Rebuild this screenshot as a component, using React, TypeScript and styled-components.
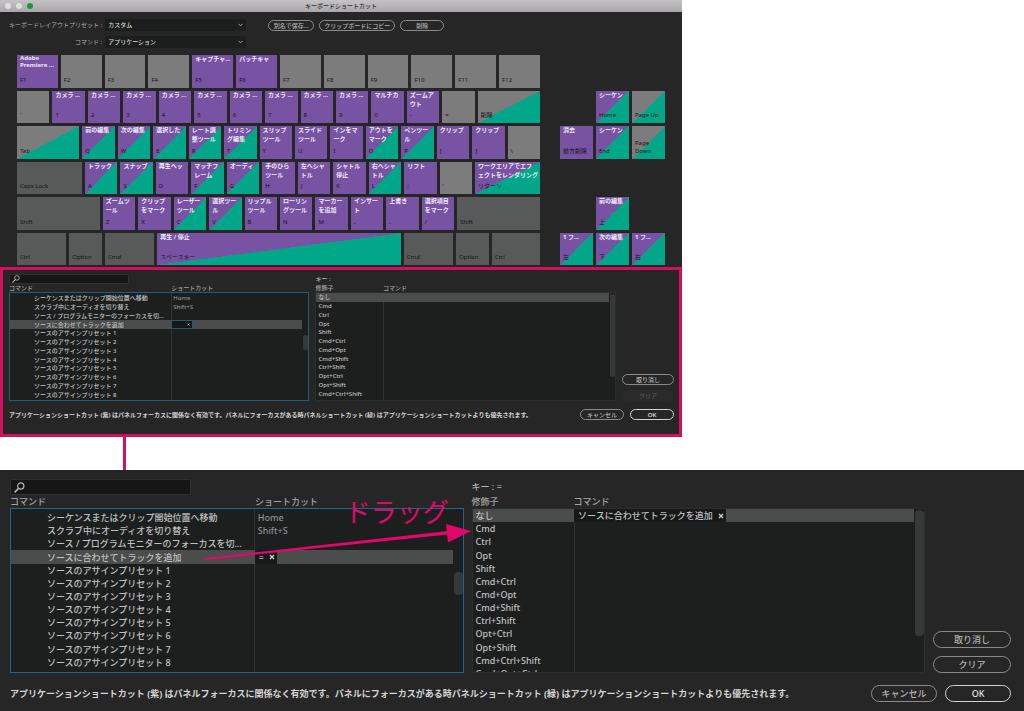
import React from 'react';
import styled, { createGlobalStyle, css, ThemeProvider } from 'styled-components';

interface Metrics {
  font: number;
  searchH: number;
  headH: number;
  boxH: number;
  rowsH: number;
  rowsTop: number;
  indent: number;
  cellPad: number;
  gap: number;
  sideW: number;
  buttonH: number;
  buttonGap: number;
  cancelW: number;
  okW: number;
  footerTop: number;
  padding: string;
  thumbW: number;
  frame: string;
  accent: string;
}

declare module 'styled-components' {
  export interface DefaultTheme extends Metrics {}
}

const compact: Metrics = {
  font: 6,
  searchH: 10,
  headH: 8,
  boxH: 109,
  rowsH: 105,
  rowsTop: 1,
  indent: 24,
  cellPad: 2,
  gap: 6,
  sideW: 52,
  buttonH: 11,
  buttonGap: 5,
  cancelW: 44,
  okW: 44,
  footerTop: 8,
  padding: '4px 5px 14px 6px',
  thumbW: 5,
  frame: '3px solid #d3105f',
  accent: '#1d5f7b',
};

const large: Metrics = {
  font: 9,
  searchH: 16,
  headH: 13,
  boxH: 165,
  rowsH: 158,
  rowsTop: 2,
  indent: 36,
  cellPad: 3,
  gap: 8,
  sideW: 78,
  buttonH: 17,
  buttonGap: 8,
  cancelW: 66,
  okW: 66,
  footerTop: 12,
  padding: '9px 13px 9px 10px',
  thumbW: 9,
  frame: '0 solid transparent',
  accent: '#1a678f',
};

const GlobalStyle = createGlobalStyle`
  *, *::before, *::after { box-sizing: border-box; }
  body {
    margin: 0;
    background: #fff;
    font-family: "Noto Sans", "Noto Sans CJK JP", sans-serif;
    color: #c9c9c9;
  }
  button, input, select { font: inherit; color: inherit; margin: 0; }
`;

const Page = styled.main`
  display: flex;
  flex-direction: column;
`;

const Dialog = styled.section`
  width: 66.6%;
  background: #262626;
`;

const TitleBar = styled.header`
  display: grid;
  grid-template-columns: 1fr auto 1fr;
  align-items: center;
  height: 12px;
  background: linear-gradient(#c4c2c4, #a9a7a9);
  color: #2e2e2e;
`;

const Lights = styled.div`
  display: flex;
  gap: 5px;
  padding-left: 5px;
`;

const Light = styled.span<{ $color: string }>`
  width: 6px;
  height: 6px;
  border-radius: 50%;
  background: ${(p) => p.$color};
`;

const Title = styled.h1`
  margin: 0;
  font-size: 6px;
  line-height: 12px;
  font-weight: 500;
`;

const Toolbar = styled.div`
  display: flex;
  gap: 22px;
  padding: 7px 9px;
  font-size: 6px;
`;

const Fields = styled.div`
  display: grid;
  grid-template-columns: auto 141px;
  gap: 5px 3px;
`;

const FieldLabel = styled.label`
  line-height: 12px;
  text-align: right;
  color: #a9a9a9;
`;

const SelectWrap = styled.div`
  position: relative;
  display: flex;
`;

const Select = styled.select`
  appearance: none;
  width: 100%;
  height: 12px;
  padding: 0 3px;
  border: 0;
  border-radius: 1px;
  background: #1c1d1d;
  line-height: 12px;
  font-weight: 500;
  color: #d6d6d6;
`;

const Chevron = styled.svg`
  position: absolute;
  right: 3px;
  top: 4px;
  pointer-events: none;
`;

const ToolButtons = styled.div`
  display: flex;
  align-items: flex-start;
  gap: 5px;
  padding-top: 1px;
`;

const PillButton = styled.button<{ $w: number; $h: number; $strong?: boolean }>`
  flex: none;
  width: ${(p) => p.$w}px;
  height: ${(p) => p.$h}px;
  padding: 0;
  border: 1px solid ${(p) => (p.$strong ? '#d2d2d2' : '#8b8b8b')};
  border-radius: 9px;
  background: transparent;
  line-height: 1;
  font-weight: 500;
  white-space: nowrap;
  color: ${(p) => (p.$strong ? '#e4e4e4' : '#b4b4b4')};
  &:disabled {
    border-color: #2a2a2a;
    background: #2a2a2a;
    color: #5a5a5a;
  }
`;

const Keyboard = styled.div`
  display: flex;
  gap: 20px;
  height: 210px;
  margin-bottom: 2px;
  padding: 0 17px;
`;

const MainKeys = styled.div`
  flex: 523 1 0;
  display: grid;
  grid-template-rows: repeat(6, 1fr);
  gap: 3px;
  min-width: 0;
`;

const NavKeys = styled.div`
  flex: 105 1 0;
  display: grid;
  grid-template: repeat(6, 1fr) / repeat(3, 1fr);
  gap: 3px;
  min-width: 0;
`;

const KeyRow = styled.div`
  display: flex;
  gap: 3px;
  min-height: 0;
`;

type Tone = 'purple' | 'grey' | 'dark';
const tones: Record<Tone, string> = { purple: '#7852a3', grey: '#7c7c7c', dark: '#585959' };

const KeyCap = styled.div<{ $tone: Tone; $split?: boolean; $weight: number; $row?: number; $col?: number }>`
  display: flex;
  flex-direction: column;
  justify-content: space-between;
  flex: ${(p) => p.$weight} 1 0;
  min-width: 0;
  padding-bottom: 4px;
  overflow: hidden;
  background: ${(p) =>
    p.$split
      ? `linear-gradient(to bottom right, ${tones[p.$tone]} 50%, #02a789 50%)`
      : tones[p.$tone]};
  ${(p) => p.$row && css`grid-area: ${p.$row} / ${p.$col};`}
`;

const KeyAction = styled.span<{ $latin?: boolean }>`
  min-height: 9px;
  padding-left: 3px;
  font-size: 6px;
  line-height: ${(p) => (p.$latin ? 7 : 9)}px;
  font-weight: 700;
  white-space: pre;
  color: #eee9f4;
`;

const KeyName = styled.span`
  padding-left: 3px;
  font-size: 6px;
  line-height: 8px;
  white-space: pre;
  color: #161616;
`;

const Panel = styled.section`
  position: relative;
  padding: ${(p) => p.theme.padding};
  border: ${(p) => p.theme.frame};
  background: #262626;
  font-size: ${(p) => p.theme.font}px;
`;

const PanelBody = styled.div`
  display: flex;
  gap: ${(p) => p.theme.gap}px;
`;

const ListColumn = styled.div`
  flex: 1 1 0;
  min-width: 0;
  position: relative;
`;

const SearchBox = styled.label`
  display: flex;
  align-items: center;
  width: 40%;
  height: ${(p) => p.theme.searchH}px;
  padding-left: ${(p) => p.theme.cellPad}px;
  border: 1px solid #303030;
  border-radius: 1px;
  background: #161616;
`;

const SearchInput = styled.input`
  flex: 1;
  min-width: 0;
  height: 100%;
  padding: 0 4px;
  border: 0;
  outline: 0;
  background: transparent;
`;

const KeyReadout = styled.div`
  height: ${(p) => p.theme.searchH}px;
  line-height: ${(p) => p.theme.searchH}px;
  font-weight: 500;
  color: #b5b5b5;
`;

const Table = styled.table<{ $split: string }>`
  display: block;
  border-collapse: collapse;
  thead, tbody { display: grid; }
  tr {
    display: grid;
    grid-template-columns: ${(p) => p.$split} minmax(0, 1fr);
    min-height: 0;
  }
`;

const HeadCell = styled.th`
  padding: 0;
  line-height: ${(p) => p.theme.headH}px;
  font-weight: 500;
  text-align: left;
  color: #a3a3a3;
`;

const Rows = styled.tbody<{ $line: string; $active?: boolean }>`
  grid-auto-rows: calc(${(p) => p.theme.rowsH}px / 12);
  height: ${(p) => p.theme.boxH}px;
  padding-top: ${(p) => (p.$active ? p.theme.rowsTop : 0)}px;
  overflow: hidden;
  border: 1px solid ${(p) => (p.$active ? p.theme.accent : '#2c2d2d')};
  background: linear-gradient(#313333, #313333) ${(p) => p.$line} 0 / 1px 100% no-repeat #1d1f1f;
`;

const Row = styled.tr<{ $selected?: boolean }>`
  background: ${(p) =>
    p.$selected
      ? `linear-gradient(#4b4c4c, #4b4c4c) 0 0 / calc(100% - ${p.theme.thumbW + 1}px) 100% no-repeat`
      : 'transparent'};
`;

const Cell = styled.td<{ $indent?: boolean; $dim?: boolean }>`
  display: flex;
  align-items: center;
  min-width: 0;
  padding: 0 0 0 ${(p) => (p.$indent ? p.theme.indent : p.theme.cellPad)}px;
  line-height: 1;
  font-weight: 500;
  white-space: nowrap;
  color: ${(p) => (p.$dim ? '#8f9090' : '#c0c0c0')};
`;

const Chip = styled.span<{ $editing?: boolean }>`
  display: flex;
  align-items: center;
  justify-content: flex-end;
  gap: ${(p) => p.theme.font - 4}px;
  height: 100%;
  min-width: 22px;
  margin-left: -${(p) => p.theme.cellPad}px;
  padding: 0 2px 0 ${(p) => p.theme.cellPad + 1}px;
  border: ${(p) => (p.$editing ? '1px solid #1d5f7b' : '0')};
  border-radius: 1px;
  background: #171919;
  color: #c0c0c0;
`;

const ChipClose = styled.button`
  display: flex;
  padding: 0;
  border: 0;
  background: transparent;
`;

const Thumb = styled.span<{ $top: string; $height: string }>`
  position: absolute;
  right: 1px;
  top: ${(p) => p.$top};
  width: ${(p) => p.theme.thumbW}px;
  height: ${(p) => p.$height};
  border-radius: 4px;
  background: #373838;
`;

const Side = styled.div`
  display: flex;
  flex-direction: column;
  justify-content: flex-end;
  gap: ${(p) => p.theme.buttonGap}px;
`;

const Footer = styled.footer`
  display: flex;
  align-items: center;
  gap: ${(p) => p.theme.gap}px;
  padding-top: ${(p) => p.theme.footerTop}px;
`;

const Note = styled.p`
  flex: 1;
  min-width: 0;
  margin: 0;
  line-height: 1;
  font-weight: 700;
  white-space: nowrap;
  color: #d4d4d4;
`;

const Connector = styled.div`
  width: 3px;
  height: 33px;
  margin-left: 12%;
  background: #d3105f;
`;

const DragNote = styled.div`
  position: absolute;
  left: 20%;
  top: 24px;
  display: flex;
  flex-direction: column;
  width: 266px;
  pointer-events: none;
`;

const DragText = styled.span`
  align-self: flex-end;
  margin-right: 22px;
  font-size: 26px;
  line-height: 36px;
  color: #e0086a;
`;

const DragArrow = styled.svg`
  margin-top: -6px;
`;

interface KeyDef {
  name: string;
  action?: string;
  tone?: Tone;
  split?: boolean;
  weight?: number;
  row?: number;
  col?: number;
}

const k = (name: string, action?: string, split?: boolean, weight = 65): KeyDef => ({
  name,
  action,
  split,
  weight,
  tone: action ? 'purple' : 'grey',
});
const mod = (name: string, weight: number): KeyDef => ({ name, weight, tone: 'dark' });

const mainRows: KeyDef[][] = [
  [
    k('F1', 'Adobe\nPremiere ...'), k('F2'), k('F3'), k('F4'), k('F5', 'キャプチャ...'), k('F6', 'パッチキャ'),
    k('F7'), k('F8'), k('F9'), k('F10'), k('F11'), k('F12'),
  ],
  [
    k('`'), ...['1', '2', '3', '4', '5', '6', '7', '8', '9'].map((n) => k(n, 'カメラ ...')),
    k('0', 'マルチカ'), k('-', 'ズームア\nウト'), k('='), k('削除', undefined, true, 125),
  ],
  [
    k('Tab', undefined, true, 125), k('Q', '前の編集', true), k('W', '次の編集', true), k('E', '選択した', true),
    k('R', 'レート調\n整ツール', true), k('T', 'トリミン\nグ編集', true), k('Y', 'スリップ\nツール'),
    k('U', 'スライド\nツール'), k('I', 'インをマ\nーク'), k('O', 'アウトを\nマーク', true),
    k('P', 'ペンツー\nル', true), k('[', 'クリップ'), k(']', 'クリップ'), k('\\'),
  ],
  [
    mod('Caps Lock', 130), k('A', 'トラック', true), k('S', 'スナップ', true), k('D', '再生ヘッ'),
    k('F', 'マッチフ\nレーム', true), k('G', 'オーディ', true), k('H', '手のひら\nツール'), k('J', '左へシャ\nトル'),
    k('K', 'シャトル\n停止'), k('L', '右へシャ\nトル', true), k(';', 'リフト'), k("'"),
    k('リターン', 'ワークエリアでエフ\nェクトをレンダリング', true, 130),
  ],
  [
    mod('Shift', 166), k('Z', 'ズームツ\nール'), k('X', 'クリップ\nをマーク'), k('C', 'レーザー\nツール', true),
    k('V', '選択ツー\nル', true), k('B', 'リップル\nツール'), k('N', 'ローリン\nグツール'), k('M', 'マーカー\nを追加'),
    k(',', 'インサー\nト'), k('.', '上書き'), k('/', '選択項目\nをマーク'), mod('Shift', 166),
  ],
  [
    mod('Ctrl', 99), mod('Option', 66), mod('Cmd', 99), k('スペースキー', '再生 / 停止', true, 490),
    mod('Cmd', 99), mod('Option', 66), mod('Ctrl', 97),
  ],
];

const navKeys: KeyDef[] = [
  { ...k('Home', 'シーケン', true), row: 2, col: 2 },
  { ...k('Page Up', undefined, true), row: 2, col: 3 },
  { ...k('前方削除', '消去'), row: 3, col: 1 },
  { ...k('End', 'シーケン', true), row: 3, col: 2 },
  { ...k('Page\nDown', undefined, true), row: 3, col: 3 },
  { ...k('上', '前の編集', true), row: 5, col: 2 },
  { ...k('左', '1 フ...', true), row: 6, col: 1 },
  { ...k('下', '次の編集', true), row: 6, col: 2 },
  { ...k('右', '1 フ...', true), row: 6, col: 3 },
];

const commands: [string, string][] = [
  ['シーケンスまたはクリップ開始位置へ移動', 'Home'],
  ['スクラブ中にオーディオを切り替え', 'Shift+S'],
  ['ソース / プログラムモニターのフォーカスを切...', ''],
  ['ソースに合わせてトラックを追加', ''],
  ...[1, 2, 3, 4, 5, 6, 7, 8].map((n): [string, string] => [`ソースのアサインプリセット ${n}`, '']),
];

const modifiers = [
  'なし', 'Cmd', 'Ctrl', 'Opt', 'Shift', 'Cmd+Ctrl', 'Cmd+Opt', 'Cmd+Shift', 'Ctrl+Shift',
  'Opt+Ctrl', 'Opt+Shift', 'Cmd+Ctrl+Shift', 'Cmd+Opt+Ctrl',
];

function Key({ def }: { def: KeyDef }) {
  return (
    <KeyCap $tone={def.tone!} $split={def.split} $weight={def.weight!} $row={def.row} $col={def.col}>
      <KeyAction $latin={def.action?.startsWith('Adobe')}>{def.action}</KeyAction>
      <KeyName>{def.name}</KeyName>
    </KeyCap>
  );
}

function SearchIcon({ size }: { size: number }) {
  return (
    <svg width={size} height={size} viewBox="0 0 12 12" fill="none" stroke="#b4b4b4" strokeWidth="1.3" aria-hidden>
      <circle cx="7.4" cy="4.4" r="3.4" />
      <path d="M5 7 1.2 10.8" strokeWidth="1.8" strokeLinecap="round" />
    </svg>
  );
}

function CloseMark({ size }: { size: number }) {
  return (
    <svg width={size} height={size} viewBox="0 0 6 6" stroke="#cccccc" strokeWidth="1.4" aria-hidden>
      <path d="M1 1 5 5M5 1 1 5" />
    </svg>
  );
}

interface PanelProps {
  metrics: Metrics;
  assigned?: boolean;
  children?: React.ReactNode;
}

function ShortcutPanel({ metrics, assigned, children }: PanelProps) {
  const mark = metrics.font - 3;
  return (
    <ThemeProvider theme={metrics}>
      <Panel>
        <PanelBody>
          <ListColumn>
            <SearchBox>
              <SearchIcon size={metrics.font + 2} />
              <SearchInput type="text" aria-label="検索" />
            </SearchBox>
            <Table $split="54%">
              <thead>
                <tr>
                  <HeadCell>コマンド</HeadCell>
                  <HeadCell>ショートカット</HeadCell>
                </tr>
              </thead>
              <Rows $line="54%" $active>
                {commands.map(([name, shortcut], i) => (
                  <Row key={name} $selected={i === 3}>
                    <Cell $indent>{name}</Cell>
                    <Cell $dim>
                      {shortcut}
                      {i === 3 && (
                        <Chip $editing={!assigned}>
                          {assigned && '='}
                          <ChipClose aria-label="解除"><CloseMark size={mark} /></ChipClose>
                        </Chip>
                      )}
                    </Cell>
                  </Row>
                ))}
              </Rows>
            </Table>
            <Thumb $top="48%" $height="12%" />
          </ListColumn>
          <ListColumn>
            <KeyReadout>キー : {assigned && '='}</KeyReadout>
            <Table $split="22.5%">
              <thead>
                <tr>
                  <HeadCell>修飾子</HeadCell>
                  <HeadCell>コマンド</HeadCell>
                </tr>
              </thead>
              <Rows $line="22.5%">
                {modifiers.map((name, i) => (
                  <Row key={name} $selected={i === 0}>
                    <Cell>{name}</Cell>
                    <Cell>
                      {i === 0 && assigned && (
                        <Chip>
                          ソースに合わせてトラックを追加
                          <ChipClose aria-label="解除"><CloseMark size={mark} /></ChipClose>
                        </Chip>
                      )}
                    </Cell>
                  </Row>
                ))}
              </Rows>
            </Table>
            <Thumb $top="16%" $height="65%" />
          </ListColumn>
          <Side>
            <PillButton $w={metrics.sideW} $h={metrics.buttonH}>取り消し</PillButton>
            <PillButton $w={metrics.sideW} $h={metrics.buttonH} disabled={!assigned}>クリア</PillButton>
          </Side>
        </PanelBody>
        <Footer>
          <Note>
            アプリケーションショートカット (紫) はパネルフォーカスに関係なく有効です。パネルにフォーカスがある時パネルショートカット (緑) はアプリケーションショートカットよりも優先されます。
          </Note>
          <PillButton $w={metrics.cancelW} $h={metrics.buttonH}>キャンセル</PillButton>
          <PillButton $w={metrics.okW} $h={metrics.buttonH} $strong>OK</PillButton>
        </Footer>
        {children}
      </Panel>
    </ThemeProvider>
  );
}

function DropDown({ id, label, value }: { id: string; label: string; value: string }) {
  return (
    <>
      <FieldLabel htmlFor={id}>{label} :</FieldLabel>
      <SelectWrap>
        <Select id={id} defaultValue={value}>
          <option>{value}</option>
        </Select>
        <Chevron width="5" height="4" viewBox="0 0 5 4" fill="none" stroke="#a8a8a8">
          <path d="M0.5 0.8 2.5 2.8 4.5 0.8" />
        </Chevron>
      </SelectWrap>
    </>
  );
}

export default function App() {
  return (
    <Page lang="ja">
      <GlobalStyle />
      <Dialog>
        <TitleBar>
          <Lights>
            <Light $color="#dedede" />
            <Light $color="#dedede" />
            <Light $color="#159a48" />
          </Lights>
          <Title>キーボードショートカット</Title>
        </TitleBar>
        <Toolbar>
          <Fields>
            <DropDown id="preset" label="キーボードレイアウトプリセット" value="カスタム" />
            <DropDown id="command" label="コマンド" value="アプリケーション" />
          </Fields>
          <ToolButtons>
            <PillButton $w={46} $h={11}>別名で保存...</PillButton>
            <PillButton $w={76} $h={11}>クリップボードにコピー</PillButton>
            <PillButton $w={44} $h={11}>削除</PillButton>
          </ToolButtons>
        </Toolbar>
        <Keyboard>
          <MainKeys>
            {mainRows.map((row, r) => (
              <KeyRow key={r}>
                {row.map((def, i) => <Key key={i} def={def} />)}
              </KeyRow>
            ))}
          </MainKeys>
          <NavKeys>
            {navKeys.map((def, i) => <Key key={i} def={def} />)}
          </NavKeys>
        </Keyboard>
        <ShortcutPanel metrics={compact} />
      </Dialog>
      <Connector />
      <ShortcutPanel metrics={large} assigned>
        <DragNote>
          <DragText>ドラッグ</DragText>
          <DragArrow width="266" height="38" viewBox="0 0 266 38" fill="#e0086a" aria-hidden>
            <path d="M0 34 243 7 243 10.5 0 36Z" />
            <path d="M241 0 266 7 243 18.5Z" />
          </DragArrow>
        </DragNote>
      </ShortcutPanel>
    </Page>
  );
}
